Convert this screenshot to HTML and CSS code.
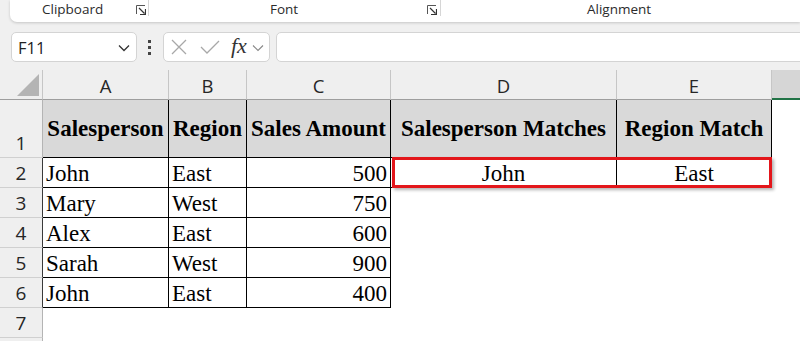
FILE: index.html
```html
<!DOCTYPE html>
<html>
<head>
<meta charset="utf-8">
<link rel="stylesheet" href="styles.css">
</head>
<body>
<div class="ribbon">
  <div class="group g-clip"><span class="glabel">Clipboard</span>
    <svg class="launch" width="10" height="10" viewBox="0 0 10 10"><path d="M0.5 9V0.5H9" fill="none" stroke="#555" stroke-width="1"/><path d="M3 3L8.5 8.5M4 9.5h5.5V4" fill="none" stroke="#333" stroke-width="1.2"/></svg>
  </div>
  <div class="sep"></div>
  <div class="group g-font"><span class="glabel">Font</span>
    <svg class="launch" width="10" height="10" viewBox="0 0 10 10"><path d="M0.5 9V0.5H9" fill="none" stroke="#555" stroke-width="1"/><path d="M3 3L8.5 8.5M4 9.5h5.5V4" fill="none" stroke="#333" stroke-width="1.2"/></svg>
  </div>
  <div class="sep"></div>
  <div class="group g-align"><span class="glabel">Alignment</span></div>
</div>

<div class="fbar">
  <div class="namebox"><span class="nb-text">F11</span>
    <svg class="chev" width="12" height="8" viewBox="0 0 12 8"><path d="M1 1.5l5 5 5-5" fill="none" stroke="#333" stroke-width="1.3"/></svg>
  </div>
  <div class="dots"><i></i><i></i><i></i></div>
  <div class="fxbox">
    <svg class="ico-x" width="16" height="16" viewBox="0 0 16 16"><path d="M1 1L15 15M15 1L1 15" stroke="#a8a8a8" stroke-width="1.3" fill="none"/></svg>
    <svg class="ico-ok" width="20" height="16" viewBox="0 0 20 16"><path d="M1 8l6 6L19 2" stroke="#a8a8a8" stroke-width="1.3" fill="none"/></svg>
    <span class="fx">fx</span>
    <svg class="chev-s" width="12" height="8" viewBox="0 0 12 8"><path d="M1 1.5l5 5 5-5" fill="none" stroke="#888" stroke-width="1.1"/></svg>
  </div>
  <div class="finput"></div>
</div>

<div class="sheet">
  <!-- column header row -->
  <div class="corner"><svg width="43" height="29" viewBox="0 0 43 29"><polygon points="39,4 39,26 17,26" fill="#b4b4b4"/></svg></div>
  <div class="ch">A</div>
  <div class="ch">B</div>
  <div class="ch">C</div>
  <div class="ch">D</div>
  <div class="ch">E</div>
  <div class="ch ch-sel"></div>

  <!-- row 1 -->
  <div class="rh rh-bottom">1</div>
  <div class="c hd">Salesperson</div>
  <div class="c hd">Region</div>
  <div class="c hd">Sales Amount</div>
  <div class="c hd">Salesperson Matches</div>
  <div class="c hd">Region Match</div>
  <div class="e"></div>

  <!-- row 2 -->
  <div class="rh rh-dark">2</div>
  <div class="c l">John</div>
  <div class="c l">East</div>
  <div class="c r">500</div>
  <div class="c m anchor">John<div class="highlight"></div></div>
  <div class="c m">East</div>
  <div class="e"></div>

  <!-- row 3 -->
  <div class="rh rh-dark">3</div>
  <div class="c l">Mary</div>
  <div class="c l">West</div>
  <div class="c r">750</div>
  <div class="e"></div>
  <div class="e"></div>
  <div class="e"></div>

  <!-- row 4 -->
  <div class="rh rh-dark">4</div>
  <div class="c l">Alex</div>
  <div class="c l">East</div>
  <div class="c r">600</div>
  <div class="e"></div>
  <div class="e"></div>
  <div class="e"></div>

  <!-- row 5 -->
  <div class="rh rh-dark">5</div>
  <div class="c l">Sarah</div>
  <div class="c l">West</div>
  <div class="c r">900</div>
  <div class="e"></div>
  <div class="e"></div>
  <div class="e"></div>

  <!-- row 6 -->
  <div class="rh rh-dark">6</div>
  <div class="c l">John</div>
  <div class="c l">East</div>
  <div class="c r">400</div>
  <div class="e"></div>
  <div class="e"></div>
  <div class="e"></div>

  <!-- row 7 -->
  <div class="rh">7</div>
  <div class="e"></div>
  <div class="e"></div>
  <div class="e"></div>
  <div class="e"></div>
  <div class="e"></div>
  <div class="e"></div>

  <!-- row 8 -->
  <div class="rh"></div>
  <div class="e"></div>
  <div class="e"></div>
  <div class="e"></div>
  <div class="e"></div>
  <div class="e"></div>
  <div class="e"></div>
</div>
</body>
</html>
```

FILE: styles.css
```css
* { box-sizing: border-box; }
html, body {
  margin: 0;
  padding: 0;
  width: 800px;
  height: 341px;
  overflow: hidden;
  background: #f0f0f0;
  font-family: "Open Sans", "Noto Sans", sans-serif;
}

/* ribbon */
.ribbon {
  margin-left: 10px;
  height: 22px;
  background: #fff;
  border-radius: 0 0 0 7px;
  box-shadow: 0 1px 3px rgba(0,0,0,0.18);
  display: flex;
  align-items: flex-start;
}
.group {
  display: flex;
  align-items: flex-start;
  height: 22px;
}
.glabel {
  font-size: 13.5px;
  line-height: 18px;
  color: #2b2b2b;
  white-space: nowrap;
}
.launch { margin-top: 5px; }
.g-clip { width: 138px; padding-left: 32px; }
.g-clip .launch { margin-left: 33px; }
.g-font { width: 291px; padding-left: 121px; }
.g-font .launch { margin-left: 129px; }
.g-align { padding-left: 146px; }
.sep {
  width: 1px;
  height: 16px;
  background: #d6d6d6;
}

/* formula bar */
.fbar {
  margin-top: 10px;
  height: 30px;
  display: flex;
  align-items: stretch;
}
.namebox {
  margin-left: 11px;
  width: 126px;
  background: #fff;
  border: 1px solid #d4d4d4;
  border-radius: 5px;
  display: flex;
  align-items: center;
  padding-left: 6px;
  padding-right: 6px;
}
.nb-text {
  font-size: 16.5px;
  color: #222;
  flex: 1;
}
.chev { margin-top: 2px; }
.dots {
  margin-left: 11px;
  width: 4px;
  display: flex;
  flex-direction: column;
  justify-content: center;
  gap: 3px;
}
.dots i {
  display: block;
  width: 3px;
  height: 3px;
  background: #444;
}
.fxbox {
  margin-left: 11px;
  width: 107px;
  background: #fff;
  border: 1px solid #d4d4d4;
  border-radius: 5px;
  display: flex;
  align-items: center;
  padding-left: 7px;
}
.ico-ok { margin-left: 13px; }
.fx {
  margin-left: 11px;
  font-family: "Liberation Serif", serif;
  font-style: italic;
  font-size: 22px;
  color: #333;
  line-height: 1;
  margin-top: -3px;
}
.chev-s { margin-left: 5px; margin-top: 2px; }
.finput {
  margin-left: 6px;
  flex: 1;
  margin-right: -10px;
  background: #fff;
  border: 1px solid #d4d4d4;
  border-radius: 5px;
}

/* sheet */
.sheet {
  margin-top: 8px;
  background: #fff;
  display: grid;
  grid-template-columns: 43px 126px 78px 144px 226px 155px 1fr;
  grid-template-rows: 30px 58px repeat(7, 30px);
}
.corner {
  background: #efefef;
  border-right: 1px solid #c6c6c6;
  border-bottom: 1px solid #9e9e9e;
}
.corner svg { display: block; }
.ch {
  background: #efefef;
  border-right: 1px solid #c6c6c6;
  border-bottom: 1px solid #9e9e9e;
  display: flex;
  align-items: center;
  justify-content: center;
  font-size: 18.5px;
  color: #262626;
  padding-top: 2px;
}
.ch-sel {
  background: #d6d6d6;
  border-right: none;
  border-bottom: 2px solid #217346;
}
.rh {
  background: #efefef;
  border-right: 1px solid #b4b4b4;
  border-bottom: 1px solid #d0d0d0;
  display: flex;
  align-items: center;
  justify-content: center;
  font-size: 19px;
  color: #262626;
  padding-top: 1px;
}
.rh-bottom { align-items: flex-end; padding-bottom: 1px; }
.rh-dark { border-right-color: #3a3a3a; }

.c {
  border-right: 1px solid #000;
  border-bottom: 1px solid #000;
  font-family: "Liberation Serif", "Times New Roman", serif;
  font-size: 23px;
  line-height: 26px;
  color: #000;
  display: flex;
  align-items: flex-end;
  white-space: nowrap;
}
.hd {
  background: #d9d9d9;
  font-weight: bold;
  align-items: center;
  justify-content: center;
  overflow: hidden;
}
.l { padding-left: 3px; }
.r { justify-content: flex-end; padding-right: 3px; }
.m { justify-content: center; }
.e { background: #fff; }

.anchor { position: relative; }
.highlight {
  position: absolute;
  left: 1px;
  top: -1px;
  width: 380px;
  height: 31px;
  border: 3px solid #e3161b;
  box-shadow: 2px 2px 3px rgba(0,0,0,0.3);
  z-index: 2;
  pointer-events: none;
}
```
